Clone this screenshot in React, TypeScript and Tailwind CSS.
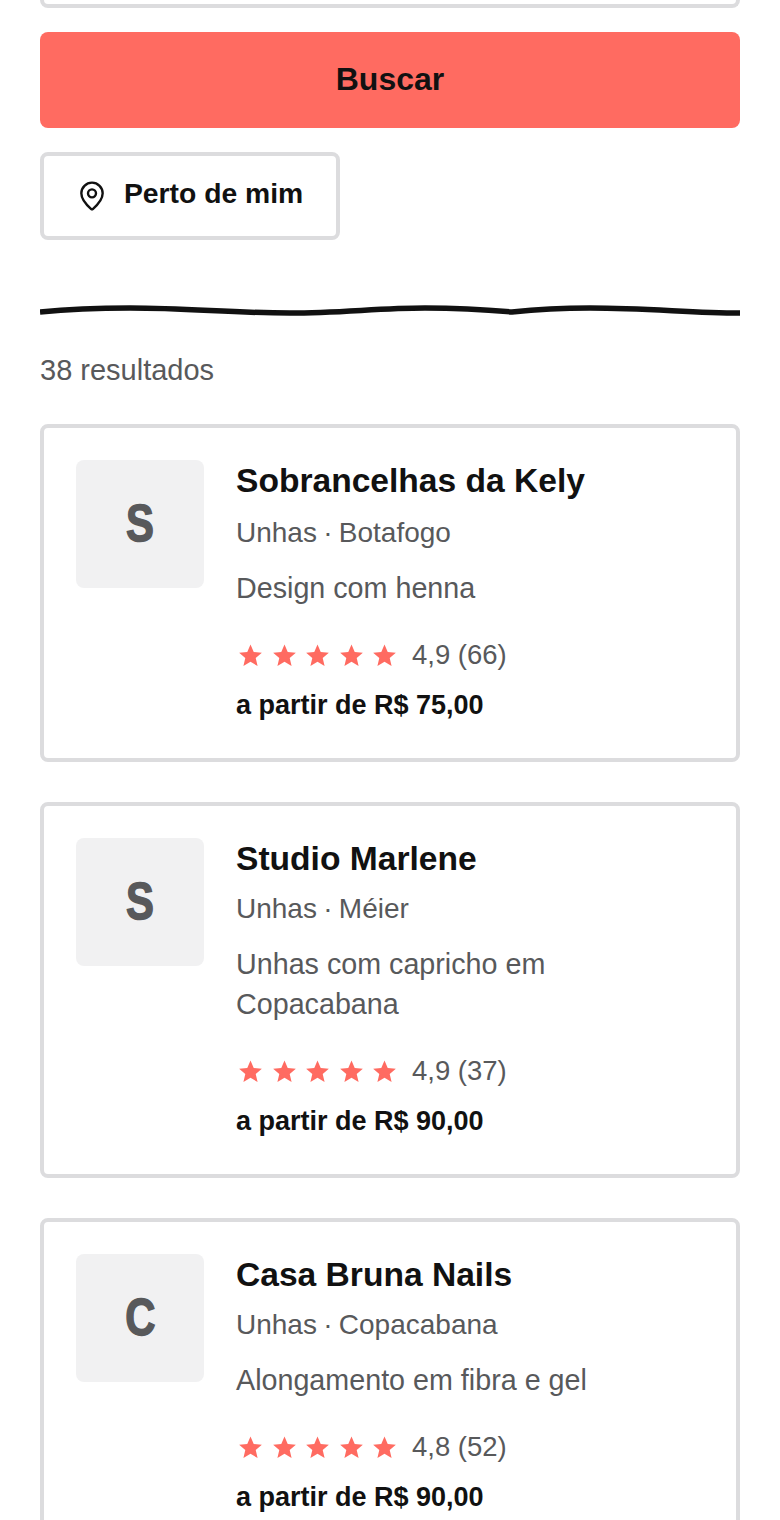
import React from 'react';
import { MapPin } from 'lucide-react';

const results = [
  { letter: 'S', name: 'Sobrancelhas da Kely', meta: 'Unhas · Botafogo', desc: 'Design com henna', rating: '4,9 (66)', price: 'a partir de R$ 75,00', metaGap: 'mt-[12px]' },
  { letter: 'S', name: 'Studio Marlene', meta: 'Unhas · Méier', desc: 'Unhas com capricho em Copacabana', rating: '4,9 (37)', price: 'a partir de R$ 90,00', metaGap: 'mt-[10px]' },
  { letter: 'C', name: 'Casa Bruna Nails', meta: 'Unhas · Copacabana', desc: 'Alongamento em fibra e gel', rating: '4,8 (52)', price: 'a partir de R$ 90,00', metaGap: 'mt-[10px]' },
];

function Stars() {
  return (
    <span className="flex items-center gap-[8.5px] pl-[2px]">
      {[0, 1, 2, 3, 4].map((i) => (
        <svg key={i} viewBox="0 0 24 24" className="w-[25px] h-[25px] fill-[#ff6b61]">
          <path d="M12 1.5l3.1 7.2 7.8.7-5.9 5.1 1.8 7.6L12 18.1l-6.8 4 1.8-7.6-5.9-5.1 7.8-.7z" />
        </svg>
      ))}
    </span>
  );
}

function ResultCard({ letter, name, meta, desc, rating, price, metaGap }: (typeof results)[number]) {
  return (
    <div className="flex gap-8 border-4 border-[#dcdcde] rounded-lg px-8 pt-8 pb-[35px]">
      <div className="w-32 h-32 shrink-0 flex items-center justify-center bg-[#f1f1f2] rounded-lg">
        <span className="inline-block scale-x-[0.82] text-[51px] font-bold text-[#58595b] [-webkit-text-stroke:1.5px_#58595b]">{letter}</span>
      </div>
      <div className="flex-1 min-w-0">
        <h3 className="pt-px text-[33.6px] leading-10 font-bold text-[#111]">{name}</h3>
        <p className={`${metaGap} text-[28px] leading-10 [word-spacing:-1.5px] text-[#58595b]`}>{meta}</p>
        <p className="mt-[15px] text-[28.7px] leading-10 text-[#58595b] pr-4">{desc}</p>
        <div className="mt-[29px] flex items-center gap-[15px] text-[27.5px] leading-9 text-[#58595b]">
          <Stars />
          <span>{rating}</span>
        </div>
        <p className="mt-[14px] text-[27px] leading-9 font-bold text-[#111]">{price}</p>
      </div>
    </div>
  );
}

export default function App() {
  return (
    <div className="h-[1520px] overflow-hidden bg-white px-10 font-['Liberation_Sans',Arial,sans-serif]">
      {/* search input, scrolled almost out of view */}
      <div className="h-2 border-4 border-t-0 border-[#dcdcde] rounded-b-lg" />

      <button className="mt-6 w-full h-24 pb-0.5 bg-[#ff6b61] rounded-lg text-[32px] font-bold text-[#111]">Buscar</button>

      <button className="mt-6 flex items-center gap-4 h-[88px] w-[300px] px-8 border-4 border-[#dcdcde] rounded-lg text-[28.3px] font-bold whitespace-nowrap text-[#111]">
        <MapPin className="w-8 h-8 shrink-0" strokeWidth={1.8} />
        <span className="mb-[5px]">Perto de mim</span>
      </button>

      <svg viewBox="0 0 700 12" preserveAspectRatio="none" className="mt-[65px] block w-full h-3">
        <path
          d="M0 7 C30 4 60 3 90 3 C150 3 190 8 250 8 C300 8 340 3 385 3 C420 3 450 5 472 7 C500 4 530 3 550 3 C610 3 650 8 700 8"
          fill="none"
          stroke="#111"
          strokeWidth="5.5"
        />
      </svg>

      <p className="mt-[33px] text-[29px] leading-10 text-[#58595b]">38 resultados</p>

      <div className="mt-[34px] flex flex-col gap-10">
        {results.map((r) => (
          <ResultCard key={r.name} {...r} />
        ))}
      </div>
    </div>
  );
}
